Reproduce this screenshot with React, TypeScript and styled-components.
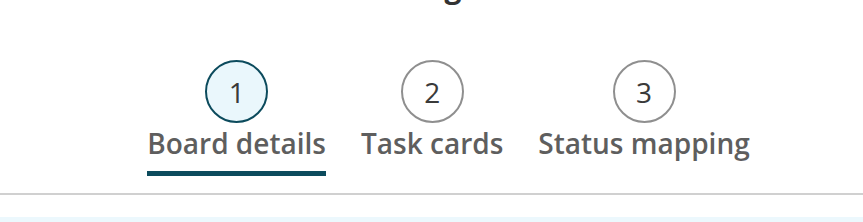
import React from "react";
import styled, { createGlobalStyle } from "styled-components";

const Global = createGlobalStyle`
  html, body { margin: 0; padding: 0; background: #ffffff; overflow: hidden; }
  body { font-family: "Open Sans", "Noto Sans", sans-serif; }
`;

const Page = styled.div`
  width: 863px;
  height: 222px;
  overflow: hidden;
  display: flex;
  flex-direction: column;
`;

const Title = styled.h1`
  margin: -32px 0 0 0;
  height: 38px;
  font-size: 30px;
  line-height: 38px;
  font-weight: 700;
  color: #333333;
  text-align: center;
  white-space: nowrap;
`;

const Steps = styled.ol`
  list-style: none;
  margin: 54px 0 0 0;
  padding: 0 0 0 34px;
  display: flex;
  justify-content: center;
  gap: 35px;
`;

const Step = styled.li`
  display: flex;
  flex-direction: column;
  align-items: center;
`;

const Circle = styled.div<{ $active: boolean }>`
  box-sizing: border-box;
  width: 63px;
  height: 63px;
  border-radius: 50%;
  border: 2px solid ${(p) => (p.$active ? "#0c4b5d" : "#8f8f8f")};
  background: ${(p) => (p.$active ? "#eaf7fc" : "#ffffff")};
  display: flex;
  align-items: center;
  justify-content: center;
  font-size: 28px;
  font-weight: 400;
  color: #3a3a3a;
`;

const Label = styled.div<{ $active: boolean }>`
  margin-top: 2px;
  font-size: 28px;
  line-height: 36px;
  font-weight: 600;
  color: #5e5e5e;
  padding-bottom: 10px;
  border-bottom: 5px solid ${(p) => (p.$active ? "#0c4b5d" : "transparent")};
  white-space: nowrap;
`;

const Divider = styled.div`
  margin-top: 17px;
  height: 4px;
  background: #d0d0d0;
`;

const Panel = styled.div`
  margin-top: 22px;
  height: 10px;
  background: #ecf8fd;
`;

const steps = ["Board details", "Task cards", "Status mapping"];

export default function App() {
  return (
    <Page>
      <Global />
      <Title>New integration</Title>
      <Steps>
        {steps.map((s, i) => (
          <Step key={s}>
            <Circle $active={i === 0}>{i + 1}</Circle>
            <Label $active={i === 0}>{s}</Label>
          </Step>
        ))}
      </Steps>
      <Divider />
      <Panel />
    </Page>
  );
}
